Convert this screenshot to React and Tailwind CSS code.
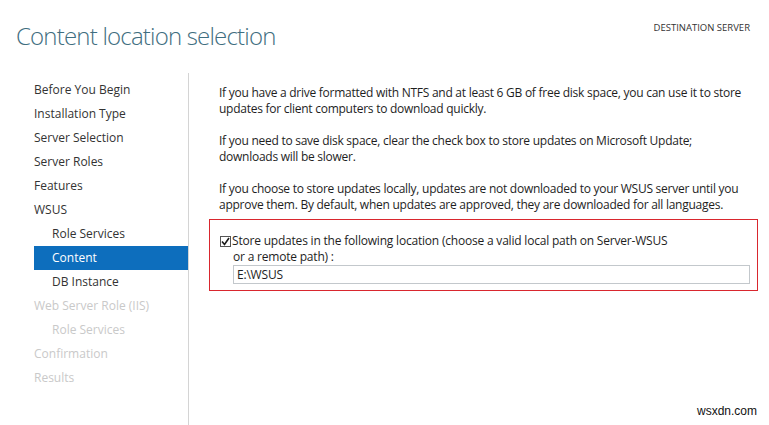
import React from "react";

const steps = [
  { label: "Before You Begin", sub: false, state: "done" },
  { label: "Installation Type", sub: false, state: "done" },
  { label: "Server Selection", sub: false, state: "done" },
  { label: "Server Roles", sub: false, state: "done" },
  { label: "Features", sub: false, state: "done" },
  { label: "WSUS", sub: false, state: "done" },
  { label: "Role Services", sub: true, state: "done" },
  { label: "Content", sub: true, state: "active" },
  { label: "DB Instance", sub: true, state: "done" },
  { label: "Web Server Role (IIS)", sub: false, state: "off" },
  { label: "Role Services", sub: true, state: "off" },
  { label: "Confirmation", sub: false, state: "off" },
  { label: "Results", sub: false, state: "off" },
];

const StepItem = ({ step }) => {
  let cls = "text-[#333333]";
  if (step.state === "active") cls = "bg-[#0d6ebd] text-white";
  if (step.state === "off") cls = "text-[#c9c9c9]";
  return (
    <div className={`h-6 flex items-center text-[12px] ${step.sub ? "pl-[18px]" : ""} ${cls}`}>
      {step.label}
    </div>
  );
};

export default function App() {
  return (
    <div
      className="w-[769px] h-[425px] bg-white relative overflow-hidden flex flex-col"
      style={{ fontFamily: '"Open Sans", "Noto Sans", sans-serif' }}
    >
      {/* Header */}
      <div className="h-[73px] flex justify-between shrink-0">
        <h1 className="pl-[16px] pt-[18px] text-[24px] font-light text-[#3f6e80] leading-[36px] tracking-[-0.8px]">
          Content location selection
        </h1>
        <div className="pr-[19px] pt-[21px] text-[9.5px] text-[#333333] leading-[14px]">
          DESTINATION SERVER
        </div>
      </div>

      {/* Body */}
      <div className="flex flex-1">
        {/* Sidebar */}
        <div className="w-[189px] shrink-0 pl-[34px] pt-[5px] border-r border-[#d4d4d4]">
          {steps.map((s, i) => (
            <StepItem key={i} step={s} />
          ))}
        </div>

        {/* Content */}
        <div className="flex-1 pl-[20px] pr-[11px] pt-[12px] text-[12px] leading-[16px] text-[#1e1e1e]">
          <div className="pl-[10px] flex flex-col gap-4 tracking-[-0.26px]">
            <p>
              If you have a drive formatted with NTFS and at least 6 GB of free disk space, you can use it to store
              <br />
              updates for client computers to download quickly.
            </p>
            <p>
              If you need to save disk space, clear the check box to store updates on Microsoft Update;
              <br />
              downloads will be slower.
            </p>
            <p>
              If you choose to store updates locally, updates are not downloaded to your WSUS server until you
              <br />
              approve them. By default, when updates are approved, they are downloaded for all languages.
            </p>
          </div>

          {/* Location box */}
          <div className="mt-[6px] border border-[#d9272e] pl-[10px] pr-[7px] pt-[13px] pb-[6px] tracking-[-0.2px]">
            <div className="flex items-center">
              <span className="w-[11px] h-[11px] border border-[#555555] flex items-center justify-center mr-[1px] shrink-0">
                <svg width="9" height="9" viewBox="0 0 9 9">
                  <path d="M1 4.5 L3.5 7.5 L8 1" fill="none" stroke="#1a1a1a" strokeWidth="1.6" />
                </svg>
              </span>
              <span>Store updates in the following location (choose a valid local path on Server-WSUS</span>
            </div>
            <div className="pl-[13px]">
              <div>or a remote path) :</div>
              <div className="h-[19px] border border-[#c3c8cc] flex items-center pl-[3px]">
                E:\WSUS
              </div>
            </div>
          </div>
        </div>
      </div>

      {/* watermark */}
      <div
        className="absolute right-[12px] bottom-[5px] text-[12px] text-[#111111]"
        style={{ fontFamily: '"Liberation Sans", Arial, sans-serif' }}
      >
        wsxdn.com
      </div>
    </div>
  );
}
